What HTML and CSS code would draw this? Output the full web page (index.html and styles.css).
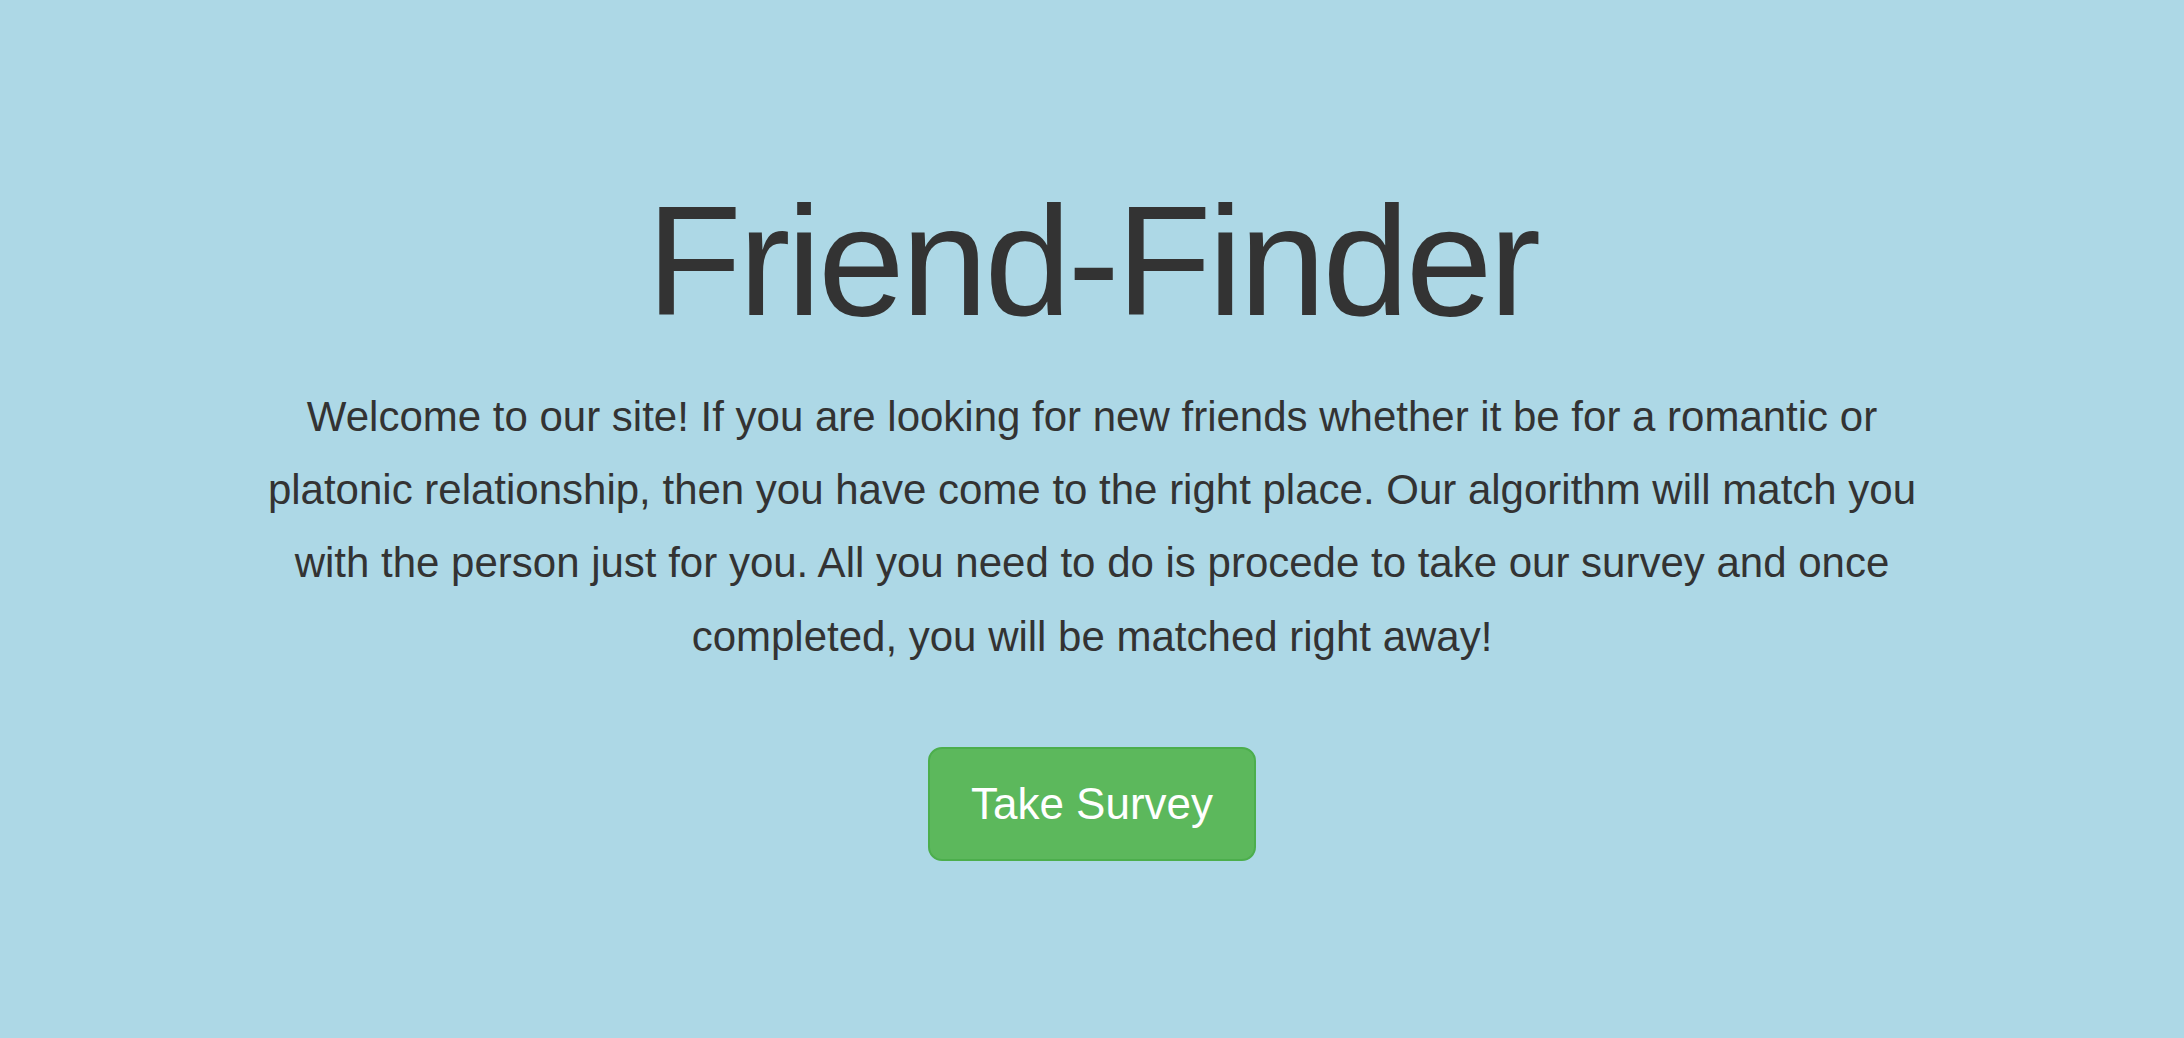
FILE: index.html
```html
<!DOCTYPE html>
<html lang="en">
<head>
<meta charset="utf-8">
<title>Friend-Finder</title>
<link rel="stylesheet" href="styles.css">
</head>
<body>
<main class="jumbotron">
  <h1 class="title">Friend-Finder</h1>
  <p class="intro">Welcome to our site! If you are looking for new friends whether it be for a romantic or platonic relationship, then you have come to the right place. Our algorithm will match you with the person just for you. All you need to do is procede to take our survey and once completed, you will be matched right away!</p>
  <a class="btn-survey" href="#">Take Survey</a>
</main>
</body>
</html>
```

FILE: styles.css
```css
html, body {
  margin: 0;
  padding: 0;
}

body {
  background: #add8e6;
  color: #333333;
  font-family: "Liberation Sans", Arial, sans-serif;
  min-height: 1038px;
}

.jumbotron {
  display: flex;
  flex-direction: column;
  align-items: center;
  padding-top: 175px;
  text-align: center;
}

.title {
  margin: 0 0 33px;
  font-family: "Liberation Sans", Arial, sans-serif;
  font-weight: normal;
  font-size: 156px;
  line-height: 172px;
  letter-spacing: -3.5px;
  color: #333333;
}

.intro {
  margin: 0 0 74px;
  width: 1685px;
  font-size: 42px;
  line-height: 73.2px;
  color: #333333;
}

.btn-survey {
  display: inline-block;
  padding: 25px 41px;
  font-size: 44px;
  line-height: 60px;
  color: #ffffff;
  text-decoration: none;
  background: #5cb85c;
  border: 2px solid #4cae4c;
  border-radius: 14px;
}
```
